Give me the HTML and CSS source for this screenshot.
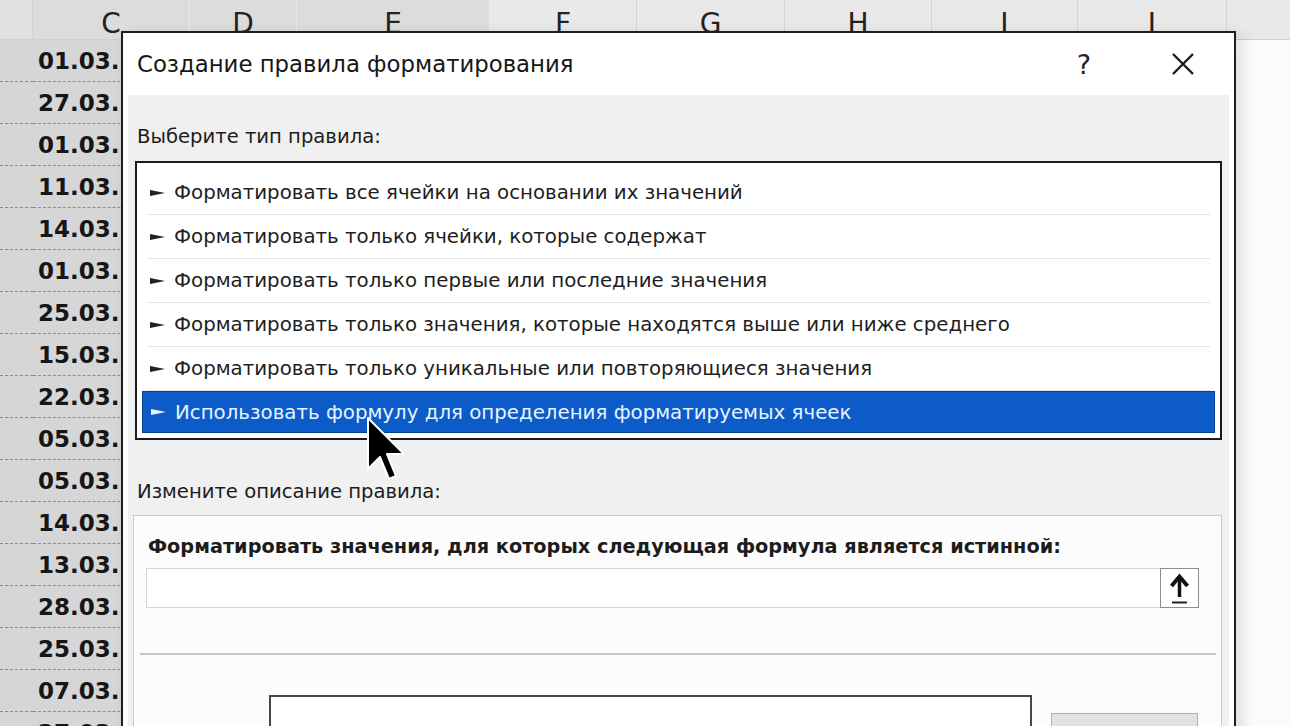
FILE: index.html
```html
<!DOCTYPE html>
<html lang="ru">
<head>
  <meta charset="UTF-8" />
  <title>Создание правила форматирования</title>
  <link rel="stylesheet" href="styles.css">
</head>
<body>

  <div class="sheet">
    <div class="col-heads">
      <div class="ch col-b"></div>
      <div class="ch col-c sel">C</div>
      <div class="ch col-d sel">D</div>
      <div class="ch col-e sel">E</div>
      <div class="ch col-f">F</div>
      <div class="ch col-g">G</div>
      <div class="ch col-h">H</div>
      <div class="ch col-i">I</div>
      <div class="ch col-j">J</div>
      <div class="ch col-k"></div>
    </div>
    <div class="rows">
      <div class="row"><div class="cell"></div><div class="cell date">01.03.2021</div></div>
      <div class="row"><div class="cell"></div><div class="cell date">27.03.2021</div></div>
      <div class="row"><div class="cell"></div><div class="cell date">01.03.2021</div></div>
      <div class="row"><div class="cell"></div><div class="cell date">11.03.2021</div></div>
      <div class="row"><div class="cell"></div><div class="cell date">14.03.2021</div></div>
      <div class="row"><div class="cell"></div><div class="cell date">01.03.2021</div></div>
      <div class="row"><div class="cell"></div><div class="cell date">25.03.2021</div></div>
      <div class="row"><div class="cell"></div><div class="cell date">15.03.2021</div></div>
      <div class="row"><div class="cell"></div><div class="cell date">22.03.2021</div></div>
      <div class="row"><div class="cell"></div><div class="cell date">05.03.2021</div></div>
      <div class="row"><div class="cell"></div><div class="cell date">05.03.2021</div></div>
      <div class="row"><div class="cell"></div><div class="cell date">14.03.2021</div></div>
      <div class="row"><div class="cell"></div><div class="cell date">13.03.2021</div></div>
      <div class="row"><div class="cell"></div><div class="cell date">28.03.2021</div></div>
      <div class="row"><div class="cell"></div><div class="cell date">25.03.2021</div></div>
      <div class="row"><div class="cell"></div><div class="cell date">07.03.2021</div></div>
      <div class="row"><div class="cell"></div><div class="cell date">27.03.2021</div></div>
    </div>
  </div>

  <div class="dialog">
    <div class="titlebar">
      <div class="title">Создание правила форматирования</div>
      <div class="tb-btn help">?</div>
      <div class="tb-btn close">
        <svg width="24" height="24" viewBox="0 0 24 24"><path d="M2 2 L22 22 M22 2 L2 22" stroke="#1a1a1a" stroke-width="2.4" fill="none"/></svg>
      </div>
    </div>

    <div class="body">
      <div class="label">Выберите тип правила:</div>
      <div class="rule-list">
        <div class="rule"><svg class="tri" width="15" height="8" viewBox="0 0 15 8"><path d="M0 1 L15 4 L0 7 Z" fill="#222"/></svg>Форматировать все ячейки на основании их значений</div>
        <div class="rule"><svg class="tri" width="15" height="8" viewBox="0 0 15 8"><path d="M0 1 L15 4 L0 7 Z" fill="#222"/></svg>Форматировать только ячейки, которые содержат</div>
        <div class="rule"><svg class="tri" width="15" height="8" viewBox="0 0 15 8"><path d="M0 1 L15 4 L0 7 Z" fill="#222"/></svg>Форматировать только первые или последние значения</div>
        <div class="rule"><svg class="tri" width="15" height="8" viewBox="0 0 15 8"><path d="M0 1 L15 4 L0 7 Z" fill="#222"/></svg>Форматировать только значения, которые находятся выше или ниже среднего</div>
        <div class="rule"><svg class="tri" width="15" height="8" viewBox="0 0 15 8"><path d="M0 1 L15 4 L0 7 Z" fill="#222"/></svg>Форматировать только уникальные или повторяющиеся значения</div>
        <div class="rule selected"><svg class="tri" width="15" height="8" viewBox="0 0 15 8"><path d="M0 1 L15 4 L0 7 Z" fill="#e6f4ff"/></svg>Использовать формулу для определения форматируемых ячеек</div>
      </div>

      <div class="label label-desc">Измените описание правила:</div>
      <div class="panel">
        <div class="panel-title">Форматировать значения, для которых следующая формула является истинной:</div>
        <div class="formula-row">
          <div class="formula-input"></div>
          <div class="ref-btn">
            <svg width="37" height="38" viewBox="0 0 37 38">
              <path d="M18.5 9 L18.5 28" stroke="#111" stroke-width="3.5" fill="none"/>
              <path d="M10.5 17 L18.5 7.5 L26.5 17" stroke="#111" stroke-width="4" fill="none" stroke-linejoin="miter"/>
              <path d="M11 33.5 L26 33.5" stroke="#222" stroke-width="2" fill="none"/>
            </svg>
          </div>
        </div>
        <div class="divider"></div>
        <div class="preview-row">
          <div class="preview"></div>
          <div class="format-btn"></div>
        </div>
      </div>
    </div>
  </div>

  <svg class="cursor" width="44" height="68" viewBox="0 0 44 68">
    <path d="M2 2 L2 53 L14 41 L23 63 L30 60 L21 38 L38 38 Z" fill="#000" stroke="#fff" stroke-width="2" stroke-linejoin="round"/>
  </svg>

</body>
</html>
```

FILE: styles.css
```css
html, body {
  margin: 0;
  padding: 0;
  height: 726px;
  overflow: hidden;
}

body {
  position: relative;
  background: #fbfbfb;
  font-family: 'DejaVu Sans', 'Noto Sans', sans-serif;
  color: #1c1c1c;
}

/* spreadsheet behind the dialog */

.col-heads {
  display: flex;
  height: 39px;
  background: #e9e9e9;
  border-bottom: 1px solid #d0d0d0;
}

.ch {
  box-sizing: border-box;
  border-right: 1px solid #d3d3d3;
  font-size: 28px;
  line-height: 1;
  padding-top: 10px;
  text-align: center;
  color: #222;
}

.ch.sel {
  background: #dcdcdc;
  border-right-color: #e9e9e9;
}

.col-b { width: 33px; background: #e2e2e2; }
.col-c { width: 157px; }
.col-d { width: 107px; }
.col-e { width: 193px; }
.col-f { width: 147px; }
.col-g { width: 148px; }
.col-h { width: 147px; }
.col-i { width: 146px; }
.col-j { width: 149px; }
.col-k { flex: 1; border-right: none; }

.row {
  display: grid;
  grid-template-columns: 33px 157px 1fr;
  height: 42px;
}

.cell {
  background: #d6d6d6;
  border-bottom: 1px dashed #8c8c8c;
}

.date {
  font-weight: bold;
  font-size: 23px;
  line-height: 42px;
  padding-left: 5px;
  white-space: nowrap;
  overflow: hidden;
  color: #161616;
}

/* dialog */

.dialog {
  position: absolute;
  left: 121px;
  top: 31px;
  width: 1115px;
  height: 720px;
  box-sizing: border-box;
  border: 2px solid #1e1e1e;
  border-bottom: none;
  background: #fff;
  padding: 0 5px;
  box-shadow: 6px 4px 14px rgba(0, 0, 0, 0.12);
  display: flex;
  flex-direction: column;
  overflow: hidden;
}

.titlebar {
  flex: none;
  height: 62px;
  display: flex;
  align-items: center;
  padding: 0 26px 0 9px;
}

.title {
  flex: 1;
  font-size: 22.8px;
  color: #161616;
}

.tb-btn {
  width: 40px;
  text-align: center;
}

.help {
  font-size: 27px;
  margin-right: 59px;
  color: #222;
}

.close svg {
  display: block;
  margin: 0 auto;
}

.body {
  flex: none;
  background: #f0f0f0;
  padding: 30px 7px 0;
  height: 700px;
}

.label {
  font-size: 19.6px;
  line-height: 24px;
  padding-left: 2px;
  color: #1c1c1c;
}

.rule-list {
  margin-top: 12px;
  border: 2px solid #1a1a1a;
  background: #fff;
  padding: 8px 5px 5px;
}

.rule {
  height: 43px;
  margin: 0 5px;
  padding-left: 3px;
  border-bottom: 1px solid #e3e3e3;
  display: flex;
  align-items: center;
  font-size: 19.8px;
  color: #1e1e1e;
  white-space: nowrap;
}

.rule .tri {
  margin-right: 9px;
  flex: none;
}

.rule.selected {
  margin: 0;
  height: 40px;
  padding-left: 8px;
  border: 1px solid #0a3f98;
  background: #0c5bc9;
  color: #e6f4ff;
}

.label-desc {
  margin-top: 40px;
}

.panel {
  margin: 11px 0 0 -2px;
  border: 1px solid #cacaca;
  background: #fcfcfc;
  padding: 19px 22px 0 12px;
  height: 300px;
}

.panel-title {
  font-weight: bold;
  font-size: 19.3px;
  line-height: 24px;
  padding-left: 2px;
  white-space: nowrap;
}

.formula-row {
  display: flex;
  margin-top: 9px;
  height: 40px;
}

.formula-input {
  flex: 1;
  background: #fff;
  border: 1px solid #d6d6d6;
  border-right: none;
}

.ref-btn {
  width: 37px;
  background: #fff;
  border: 1px solid #8e8e8e;
}

.ref-btn svg {
  display: block;
}

.divider {
  height: 2px;
  background: #c6c6c6;
  margin: 45px -17px 0 -6px;
}

.preview-row {
  display: flex;
  align-items: flex-start;
  gap: 19px;
  margin-top: 40px;
  padding-left: 123px;
}

.preview {
  flex: none;
  width: 759px;
  height: 120px;
  border: 2px solid #474747;
  background: #fff;
}

.format-btn {
  flex: none;
  margin-top: 18px;
  width: 145px;
  height: 60px;
  background: #e2e2e2;
  border: 1px solid #b0b0b0;
}

.cursor {
  position: absolute;
  left: 366px;
  top: 416px;
}
```
